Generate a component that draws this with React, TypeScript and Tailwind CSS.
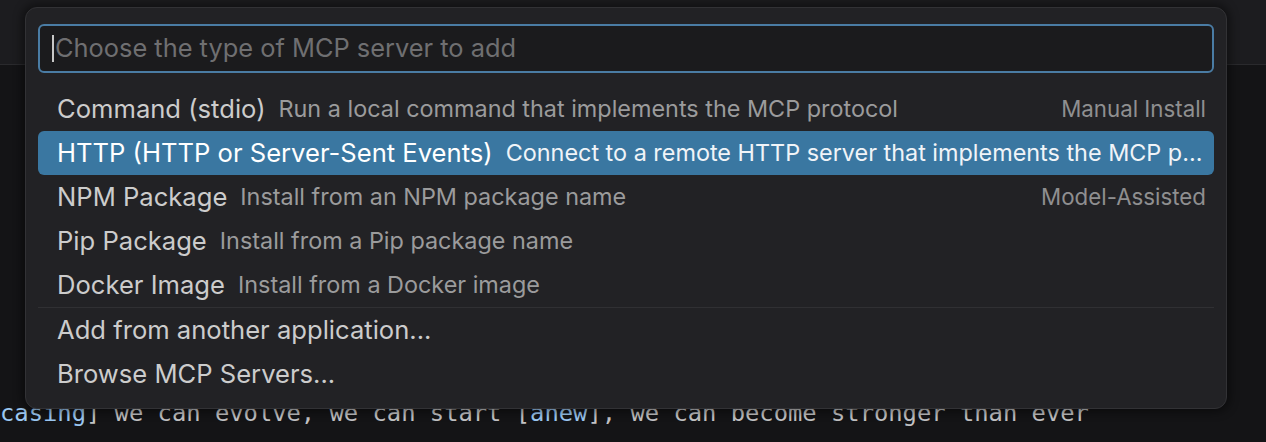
import React from "react";

type Item = {
  label: string;
  desc?: string;
  right?: string;
  active?: boolean;
};

const group1: Item[] = [
  { label: "Command (stdio)", desc: "Run a local command that implements the MCP protocol", right: "Manual Install" },
  { label: "HTTP (HTTP or Server-Sent Events)", desc: "Connect to a remote HTTP server that implements the MCP protocol", active: true },
  { label: "NPM Package", desc: "Install from an NPM package name", right: "Model-Assisted" },
  { label: "Pip Package", desc: "Install from a Pip package name" },
  { label: "Docker Image", desc: "Install from a Docker image" },
];

const group2: Item[] = [
  { label: "Add from another application..." },
  { label: "Browse MCP Servers..." },
];

function Row({ item }: { item: Item }) {
  return (
    <div
      className={
        item.active
          ? "flex h-[44px] items-center rounded-[6px] bg-[#3a77a1] pl-[19px] pr-[8px] text-white"
          : "flex h-[44px] items-center rounded-[6px] pl-[19px] pr-[8px] text-[#cccccc]"
      }
    >
      <div className="flex min-w-0 flex-1 items-center overflow-hidden whitespace-nowrap">
        <span className="shrink-0 text-[25.6px]">{item.label}</span>
        {item.desc && (
          <span
            className={
              item.active
                ? "ml-[13px] min-w-0 truncate text-[23.4px] text-[#f0f4f8]"
                : "ml-[13px] min-w-0 truncate text-[23.4px] text-[#9b9b9c]"
            }
          >
            {item.desc}
          </span>
        )}
      </div>
      {item.right && (
        <span className="ml-4 shrink-0 whitespace-nowrap text-[22.3px] text-[#8f8f90]">{item.right}</span>
      )}
    </div>
  );
}

export default function App() {
  return (
    <div
      className="relative h-[442px] w-[1266px] overflow-hidden bg-[#141416]"
      style={{ fontFamily: "Inter, 'Noto Sans', sans-serif" }}
    >
      <div className="h-[65px] border-b border-[#2a2a2d] bg-[#1c1c1f]" />
      <div
        className="pt-[333px] text-[23.8px] leading-[30px] whitespace-pre text-[#c2c2c4]"
        style={{ fontFamily: "'DejaVu Sans Mono', monospace" }}
      >
        <span className="text-[#9cc8f2]">casing</span>] we can evolve, we can start [<span className="text-[#9cc8f2]">anew</span>], we can become stronger than ever
      </div>

      <div className="absolute left-[25px] top-[7px] flex h-[402px] w-[1202px] flex-col rounded-[12px] border border-[#323235] bg-[#222225] px-[12px] pt-[16px] shadow-[0_0_10px_3px_rgba(0,0,0,0.45)]">
        <div className="flex h-[49px] items-center rounded-[6px] border-2 border-[#4a7ca4] bg-[#1b1b1d] pl-[12px]">
          <span className="h-[27px] w-[2px] bg-[#c8c8c8]" />
          <span className="ml-px text-[25.4px] text-[#6f6f71]">Choose the type of MCP server to add</span>
        </div>
        <div className="mt-[14px] flex flex-col">
          {group1.map((it) => (
            <Row key={it.label} item={it} />
          ))}
          <div className="h-px bg-[#303033]" />
          {group2.map((it) => (
            <Row key={it.label} item={it} />
          ))}
        </div>
      </div>
    </div>
  );
}
